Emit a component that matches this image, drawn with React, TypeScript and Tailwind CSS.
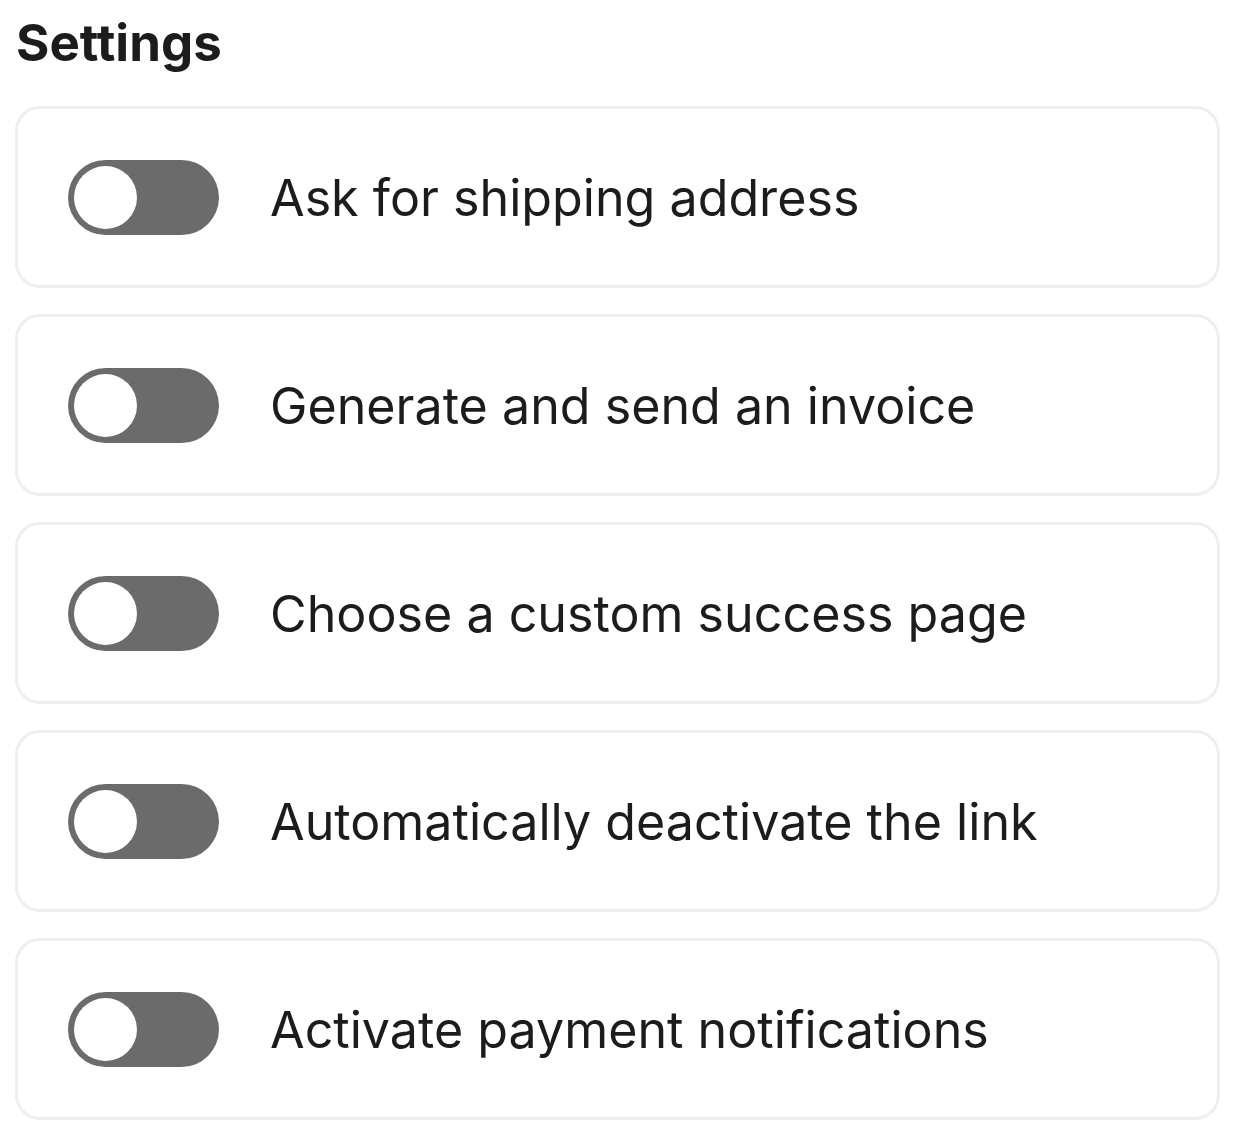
import React from "react";

const items = [
  "Ask for shipping address",
  "Generate and send an invoice",
  "Choose a custom success page",
  "Automatically deactivate the link",
  "Activate payment notifications",
];

function Toggle() {
  return (
    <div className="flex h-[75px] w-[151px] shrink-0 items-center rounded-full bg-[#6b6b6b] px-[6px]">
      <div className="h-[63px] w-[63px] rounded-full bg-white" />
    </div>
  );
}

export default function App() {
  return (
    <div
      className="min-h-screen bg-white pl-[15px] pr-[14px] pt-[5px] text-[#1c1c1c]"
      style={{ fontFamily: "Inter, 'Noto Sans', sans-serif" }}
    >
      <h1 className="mb-[26px] pl-[1px] text-[51px] font-bold leading-[75px]">
        Settings
      </h1>
      <div className="flex flex-col gap-[26px]">
        {items.map((t) => (
          <div
            key={t}
            className="flex h-[182px] items-center gap-[51px] rounded-[25px] border-[3px] border-[#efefef] px-[50px]"
          >
            <Toggle />
            <span className="text-[50.2px] leading-[75px]">{t}</span>
          </div>
        ))}
      </div>
    </div>
  );
}
